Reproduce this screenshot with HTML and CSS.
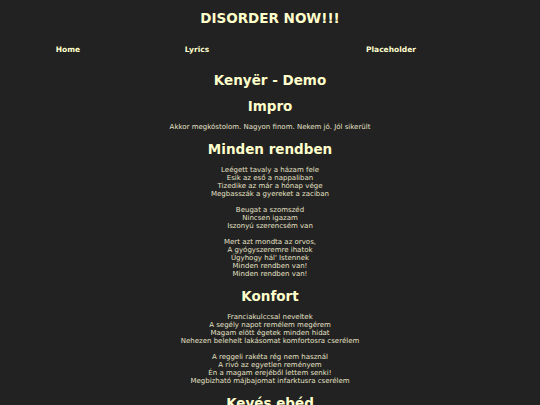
FILE: index.html
```html
<!DOCTYPE html>
<html lang="hu">
<head>
<meta charset="utf-8">
<title>DISORDER NOW!!!</title>
<link rel="stylesheet" href="styles.css">
</head>
<body>
<header class="site-header">
  <div class="site-title">DISORDER NOW!!!</div>
  <nav class="nav">
    <a class="nav-item" href="#">Home</a>
    <a class="nav-item" href="#">Lyrics</a>
    <a class="nav-item" href="#">Placeholder</a>
  </nav>
</header>
<main class="content">
  <h1 class="album">Kenyër - Demo</h1>
  <section class="song">
    <h2 class="song-title">Impro</h2>
    <p class="stanza">Akkor megkóstolom. Nagyon finom. Nekem jó. Jól sikerült</p>
  </section>
  <section class="song">
    <h2 class="song-title">Minden rendben</h2>
    <p class="stanza">Leégett tavaly a házam fele<br>Esik az eső a nappaliban<br>Tizedike az már a hónap vége<br>Megbasszák a gyereket a zaciban</p>
    <p class="stanza">Beugat a szomszéd<br>Nincsen igazam<br>Iszonyú szerencsém van</p>
    <p class="stanza">Mert azt mondta az orvos,<br>A gyógyszeremre ihatok<br>Úgyhogy hál' Istennek<br>Minden rendben van!<br>Minden rendben van!</p>
  </section>
  <section class="song">
    <h2 class="song-title">Konfort</h2>
    <p class="stanza">Franciakulccsal neveltek<br>A segély napot remélem megérem<br>Magam elött égetek minden hidat<br>Nehezen belehelt lakásomat komfortosra cserélem</p>
    <p class="stanza">A reggeli rakéta rég nem használ<br>A rivó az egyetlen reményem<br>Én a magam erejéből lettem senki!<br>Megbizható májbajomat infarktusra cserélem</p>
  </section>
  <section class="song">
    <h2 class="song-title">Kevés ebéd</h2>
    <p class="stanza">Kevés ebéd</p>
  </section>
</main>
</body>
</html>
```

FILE: styles.css
```css
html, body {
  margin: 0;
  padding: 0;
  background: #222222;
}
body {
  font-family: "DejaVu Sans", Verdana, sans-serif;
  color: #e4e0c4;
  font-size: 7px;
  line-height: 8px;
}
.site-header {
  padding: 10px 8px 0;
}
.site-title {
  text-align: center;
  font-size: 13.5px;
  line-height: 16px;
  font-weight: bold;
  color: #ffffcc;
}
.nav {
  display: grid;
  grid-template-columns: 120px 138px 250px;
  margin-top: 19px;
}
.nav-item {
  text-align: center;
  font-size: 7.5px;
  line-height: 9px;
  font-weight: bold;
  color: #ffffcc;
  text-decoration: none;
}
.content {
  text-align: center;
  padding: 0 8px;
}
.album, .song-title {
  font-size: 13.5px;
  line-height: 16px;
  font-weight: bold;
  color: #ffffcc;
  margin: 10px 0 9px;
}
.album {
  margin-top: 18px;
}
.stanza {
  margin: 8px 0;
}
```
